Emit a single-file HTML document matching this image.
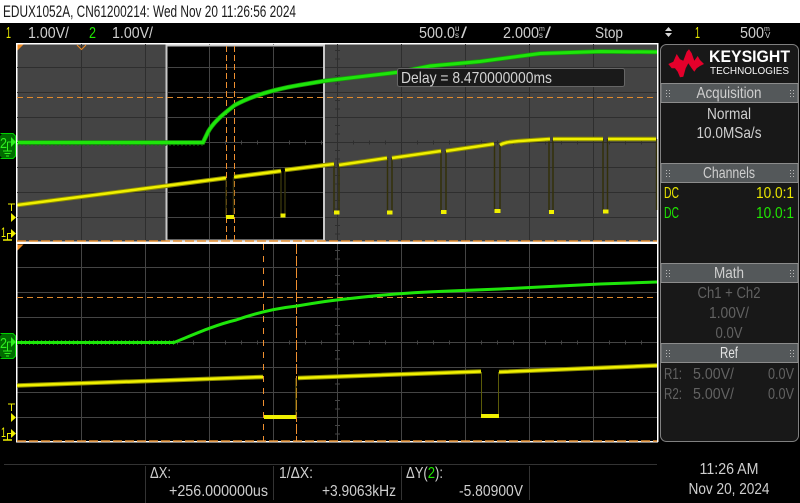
<!DOCTYPE html>
<html><head><meta charset="utf-8">
<style>
html,body{margin:0;padding:0;background:#000;width:800px;height:503px;overflow:hidden}
svg{display:block}
text{font-family:"Liberation Sans",sans-serif;fill:#cfcfcf;font-size:16px}
.y{fill:#e8e800}.g{fill:#20e800}.d{fill:#626262}.w{fill:#e4e4e4}
.h{text-anchor:middle}
</style></head><body>
<svg width="800" height="503" viewBox="0 0 800 503" xmlns="http://www.w3.org/2000/svg">
<defs>
<g id="grip" fill="#b8b8b8"><rect x="0" y="0" width="1" height="1"/><rect x="3" y="0" width="1" height="1"/><rect x="0" y="3" width="1" height="1"/><rect x="3" y="3" width="1" height="1"/><rect x="0" y="6" width="1" height="1"/><rect x="3" y="6" width="1" height="1"/></g>
<g id="vt" stroke-width="1" fill="none">
<path d="M81.5 0V197M145.5 0V197M209.5 0V197M273.5 0V197M337.5 0V197M401.5 0V197M465.5 0V197M529.5 0V197M593.5 0V197"/>
<path d="M17 23.5H657M17 48.5H657M17 73.5H657M17 98.5H657M17 123.5H657M17 148.5H657M17 173.5H657"/>
<path d="M33.5 96.5v4M49.5 96.5v4M65.5 96.5v4M97.5 96.5v4M113.5 96.5v4M129.5 96.5v4M161.5 96.5v4M177.5 96.5v4M193.5 96.5v4M225.5 96.5v4M241.5 96.5v4M257.5 96.5v4M289.5 96.5v4M305.5 96.5v4M321.5 96.5v4M353.5 96.5v4M369.5 96.5v4M385.5 96.5v4M417.5 96.5v4M433.5 96.5v4M449.5 96.5v4M481.5 96.5v4M497.5 96.5v4M513.5 96.5v4M545.5 96.5v4M561.5 96.5v4M577.5 96.5v4M609.5 96.5v4M625.5 96.5v4M641.5 96.5v4"/>
<path d="M335 6.5h5M335 15h5M335 31.5h5M335 40h5M335 56.5h5M335 65h5M335 81.5h5M335 90h5M335 106.5h5M335 115h5M335 131.5h5M335 140h5M335 156.5h5M335 165h5M335 181.5h5M335 190h5"/>
</g>
</defs>

<rect width="800" height="503" fill="#000"/>
<!-- title bar -->
<rect width="800" height="23" fill="#fff"/>
<text x="3" y="17" style="fill:#1a1a1a;font-size:16.5px" textLength="293" lengthAdjust="spacingAndGlyphs">EDUX1052A, CN61200214: Wed Nov 20 11:26:56 2024</text>

<!-- status bar -->
<text x="6" y="38" class="y" textLength="5" lengthAdjust="spacingAndGlyphs">1</text>
<text x="28" y="38" textLength="41" lengthAdjust="spacingAndGlyphs">1.00V/</text>
<text x="89" y="38" class="g" textLength="7" lengthAdjust="spacingAndGlyphs">2</text>
<text x="112" y="38" textLength="41" lengthAdjust="spacingAndGlyphs">1.00V/</text>
<text x="419" y="38" textLength="36" lengthAdjust="spacingAndGlyphs">500.0</text>
<text x="455" y="31" style="font-size:8px">u</text><text x="455" y="38" style="font-size:8px">s</text>
<text x="461" y="38" textLength="6" lengthAdjust="spacingAndGlyphs">/</text>
<text x="503" y="38" textLength="36" lengthAdjust="spacingAndGlyphs">2.000</text>
<text x="539" y="31" style="font-size:7px">m</text><text x="539" y="38" style="font-size:8px">s</text>
<text x="545" y="38" textLength="6" lengthAdjust="spacingAndGlyphs">/</text>
<text x="595" y="38" textLength="28" lengthAdjust="spacingAndGlyphs">Stop</text>
<path d="M668.5 27l3.5 4h-7zM668.5 37l3.5-4h-7z" fill="#d8d8d8"/>
<text x="695" y="38" class="y" textLength="5" lengthAdjust="spacingAndGlyphs">1</text>
<text x="740" y="38" textLength="24" lengthAdjust="spacingAndGlyphs">500</text>
<text x="764" y="31" style="font-size:7px">m</text><text x="765" y="38" style="font-size:8px">V</text>

<!-- frame -->
<rect x="16" y="43" width="642" height="1.5" fill="#fff"/>
<rect x="16" y="43" width="1.5" height="399" fill="#fff"/>
<rect x="657" y="43" width="1.5" height="399" fill="#fff"/>
<rect x="16" y="241.5" width="642" height="2.5" fill="#fff"/>
<rect x="16" y="441" width="642" height="1.5" fill="#fff"/>

<!-- upper plot -->
<rect x="17.5" y="44.5" width="639.5" height="197" fill="#444"/>
<use href="#vt" x="0" y="44" stroke="#2e2e2e"/>
<rect x="166.500" y="45.500" width="157.500" height="195" fill="#000" stroke="#c8c8c8" stroke-width="2"/>
<svg x="168" y="47" width="155" height="192" viewBox="168 47 155 192"><use href="#vt" x="0" y="44" stroke="#444"/></svg>
<path d="M17 97.5H657" stroke="#e08a2c" stroke-width="1" stroke-dasharray="6 4"/>
<path d="M17 241H657" stroke="#e08a2c" stroke-width="1.5" stroke-dasharray="9 3"/>
<path d="M226.5 46V240M234.5 46V240" stroke="#f09030" stroke-width="1" stroke-dasharray="6 3"/>
<path d="M17.5 44.5h6l-6 6z" fill="#f08a20"/>
<path d="M77 45l4.5 4.5 4.5-4.5" stroke="#f08a20" fill="none" stroke-width="1"/>

<!-- upper yellow trace -->
<g fill="none">
<path d="M226 178V217M233.500 177V217M281 171V215M285 171V215M334 164V212M339 164V212M387.500 158V211M392 158V211M441 151V211M446 151V211M494.500 145V210M500 145V210M549 140V210M553 140V210M603 139V210M607.500 139V210M656.500 139V210" stroke="#33300a" stroke-width="1.500"/>
<path d="M17.500 205L165 186M165 186L226 178M234 177L281 171M285 170L334 164M339 165L387 158M392 158L441 151M446 151L494 144M500 145C505 142 510 142 520 141L550 139M553 139H603M608 139H656" stroke="#8c8c00" stroke-width="4.500"/>
<path d="M17.500 205L226 178M234 177L281 171M285 170L334 164M339 165L387 158M392 158L441 151M446 151L494 144M500 145C505 142 510 142 520 141L550 139M553 139H603M608 139H656" stroke="#f0f000" stroke-width="2.500"/>
<path d="M226 217h8M280.500 215.500h5M334 212.500h5.500M387 212.500h5.500M441 212h5.500M494.500 211h6M549 212h5M603 211.500h5.500" stroke="#f0f000" stroke-width="4"/>
<!-- upper green trace -->
<path d="M17.500 143.500H203" stroke="#0b7a08" stroke-width="5" stroke-dasharray="1 3"/>
<path d="M17.500 142.500H203L208 132C214 121 226 112 235 105C250 97 270 90 300 85L324 81L400 72L430 66L480 61.500L540 53.500L600 51.500L657 52" stroke="#169c0a" stroke-width="4.500"/>
<path d="M17.500 142.500H203L208 132C214 121 226 112 235 105C250 97 270 90 300 85L324 81L400 72L430 66L480 61.500L540 53.500L600 51.500L657 52" stroke="#1ee60a" stroke-width="3"/>
</g>

<!-- lower plot -->
<svg x="17.5" y="244" width="639.5" height="197" viewBox="17.500 244 639.500 197"><use href="#vt" x="0" y="244" stroke="#444"/></svg>
<path d="M17 297.500H657" stroke="#e08a2c" stroke-width="1" stroke-dasharray="6 4"/>
<path d="M17 441H657" stroke="#e08a2c" stroke-width="1.500" stroke-dasharray="9 3"/>
<path d="M263.500 244V441" stroke="#f09030" stroke-width="1" stroke-dasharray="6 6"/>
<path d="M296.500 244V441" stroke="#f09030" stroke-width="1" stroke-dasharray="10 2"/>
<path d="M17.500 244.500h6l-6 6z" fill="#f08a20"/>
<g fill="none">
<path d="M481.500 372V416M498.500 372V416" stroke="#5a5a08" stroke-width="1"/>
<path d="M296 378V417" stroke="#8a7a10" stroke-width="1"/>
<path d="M17 385.500L263 377M298 378L481 371.500M499 372L657 365.500" stroke="#8c8c00" stroke-width="4.500"/>
<path d="M17 385.500L263 377M298 378L481 371.500M499 372L657 365.500" stroke="#f0f000" stroke-width="2.500"/>
<path d="M264 417H296M481 416H499" stroke="#f0f000" stroke-width="4"/>
<path d="M17 342.500H174" stroke="#0b7a08" stroke-width="5" stroke-dasharray="1 3"/>
<path d="M17 342.500H174C195 334 215 325 236 320C250 315 270 309 297 306C320 302 335 300 350 298.500C380 295 420 292 450 291L500 289L550 286.500L600 284L657 282" stroke="#1ee60a" stroke-width="3"/>
</g>

<!-- left markers -->
<g id="m2">
<path d="M3 133H13L16 136V156L13 159H3L0 156V136Z" fill="#006a00"/>
<path d="M0.500 133.500H13L15.500 136V156L13 158.500H0.500" fill="none" stroke="#00d000" stroke-width="1"/>
<text x="0" y="148" style="font-size:15px;fill:#30f020" textLength="7" lengthAdjust="spacingAndGlyphs">2</text>
<path d="M11 137l5 5-5 5z" fill="#30f020"/>
<path d="M7.500 142H11M7.500 142V151M3 151h9M4.500 153.500h6M6 156h3" stroke="#30f020" stroke-width="1" fill="none"/>
</g>
<use href="#m2" y="200"/>
<g id="ym">
<path d="M8 204H15M11.500 204V211" stroke="#f0f000" fill="none"/>
<path d="M11 213l5 4.500-5 4.500z" fill="#f0f000"/>
<text x="1" y="237" style="font-size:14px;fill:#f0f000" textLength="5" lengthAdjust="spacingAndGlyphs">1</text>
<path d="M7.500 240V233.500H11" stroke="#f0f000" fill="none"/>
<path d="M11 229l5 4.500-5 4.500z" fill="#f0f000"/>
<path d="M3 240H12" stroke="#f0f000" stroke-width="1.500"/>
</g>
<use href="#ym" y="200"/>

<!-- delay box -->
<rect x="397.500" y="68.500" width="227" height="18" rx="2" fill="#1a1a1a" stroke="#666"/>
<text x="401" y="83" textLength="151" lengthAdjust="spacingAndGlyphs" style="fill:#d4d4d4">Delay = 8.470000000ms</text>

<!-- right panel -->
<rect x="660.500" y="44.500" width="138" height="397" rx="6" fill="#181818" stroke="#808080"/>
<polygon fill="#e4002b" points="668.300,64 673.300,61.700 676.700,54 680,59.300 683.300,60.700 686.700,51.700 689,49.300 691.700,53.300 694.300,60.700 697.700,56 700,60 704,64 700,66 696.700,68.300 694.300,71.700 691.700,68.300 688.300,63.300 685.700,68.300 683.300,76.700 680,77.300 677.700,71.700 675,68.300 671.700,68.300"/>
<text x="709" y="62" textLength="81" lengthAdjust="spacingAndGlyphs" style="font-size:17px;font-weight:bold;fill:#fff">KEYSIGHT</text>
<text x="710" y="74" textLength="79" lengthAdjust="spacingAndGlyphs" style="font-size:10.500px;fill:#f4f4f4">TECHNOLOGIES</text>

<g fill="#54585a" stroke="#8c8c8c" stroke-width="1">
<rect x="661" y="83.500" width="137" height="19"/>
<rect x="661" y="163.500" width="137" height="19"/>
<rect x="661" y="263.500" width="137" height="19"/>
<rect x="661" y="343.500" width="137" height="19"/>
</g>
<use href="#grip" x="666" y="90"/><use href="#grip" x="790" y="90"/>
<use href="#grip" x="666" y="170"/><use href="#grip" x="790" y="170"/>
<use href="#grip" x="666" y="270"/><use href="#grip" x="790" y="270"/>
<use href="#grip" x="666" y="350"/><use href="#grip" x="790" y="350"/>

<text x="729" y="98" class="h" textLength="65" lengthAdjust="spacingAndGlyphs">Acquisition</text>
<text x="729" y="119" class="h" textLength="44" lengthAdjust="spacingAndGlyphs">Normal</text>
<text x="729" y="138" class="h" textLength="65" lengthAdjust="spacingAndGlyphs">10.0MSa/s</text>
<text x="729" y="178" class="h" textLength="52" lengthAdjust="spacingAndGlyphs">Channels</text>
<text x="664" y="198" class="y" textLength="15" lengthAdjust="spacingAndGlyphs">DC</text>
<text x="756" y="198" class="y" textLength="38" lengthAdjust="spacingAndGlyphs">10.0:1</text>
<text x="664" y="218" class="g" textLength="15" lengthAdjust="spacingAndGlyphs">DC</text>
<text x="756" y="218" class="g" textLength="38" lengthAdjust="spacingAndGlyphs">10.0:1</text>
<text x="729" y="278" class="h" textLength="30" lengthAdjust="spacingAndGlyphs">Math</text>
<text x="729" y="298" class="h d" textLength="63" lengthAdjust="spacingAndGlyphs">Ch1 + Ch2</text>
<text x="729" y="318" class="h d" textLength="40" lengthAdjust="spacingAndGlyphs">1.00V/</text>
<text x="729" y="338" class="h d" textLength="27" lengthAdjust="spacingAndGlyphs">0.0V</text>
<text x="729" y="358" class="h w" textLength="18" lengthAdjust="spacingAndGlyphs">Ref</text>
<text x="664" y="379" class="d" textLength="18" lengthAdjust="spacingAndGlyphs">R1:</text>
<text x="693" y="379" class="d" textLength="41" lengthAdjust="spacingAndGlyphs">5.00V/</text>
<text x="768" y="379" class="d" textLength="26" lengthAdjust="spacingAndGlyphs">0.0V</text>
<text x="664" y="399" class="d" textLength="18" lengthAdjust="spacingAndGlyphs">R2:</text>
<text x="693" y="399" class="d" textLength="41" lengthAdjust="spacingAndGlyphs">5.00V/</text>
<text x="768" y="399" class="d" textLength="26" lengthAdjust="spacingAndGlyphs">0.0V</text>

<!-- bottom readouts -->
<path d="M4 464.500H657" stroke="#333"/>
<path d="M145.500 466V503M273.500 466V500M401.500 466V500M529.500 466V500" stroke="#333"/>
<text x="150" y="478" textLength="21" lengthAdjust="spacingAndGlyphs">ΔX:</text>
<text x="169" y="496" textLength="99" lengthAdjust="spacingAndGlyphs">+256.000000us</text>
<text x="279" y="478" textLength="34" lengthAdjust="spacingAndGlyphs">1/ΔX:</text>
<text x="322" y="496" textLength="74" lengthAdjust="spacingAndGlyphs">+3.9063kHz</text>
<text x="406" y="478" textLength="37" lengthAdjust="spacingAndGlyphs">ΔY(<tspan class="g">2</tspan>):</text>
<text x="459" y="496" textLength="64" lengthAdjust="spacingAndGlyphs">-5.80900V</text>
<text x="729" y="474" class="h" textLength="59" lengthAdjust="spacingAndGlyphs">11:26 AM</text>
<text x="729" y="494" class="h" textLength="81" lengthAdjust="spacingAndGlyphs">Nov 20, 2024</text>
</svg>
</body></html>
